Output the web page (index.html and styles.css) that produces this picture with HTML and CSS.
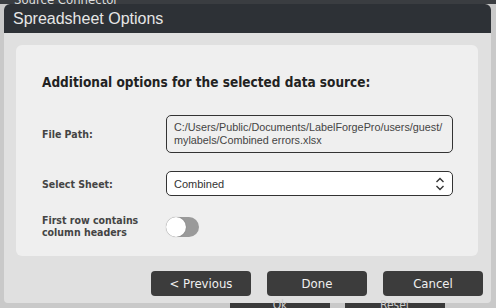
FILE: index.html
```html
<!DOCTYPE html>
<html>
<head>
    <title>Spreadsheet Options</title>
    <link rel="stylesheet" href="styles.css">
</head>
<body>
    <div class="app-top">Source Connector</div>

    <div class="dialog">
        <div class="dialog-header">Spreadsheet Options</div>
        <div class="dialog-body">
            <div class="panel">
                <h3 class="panel-title">Additional options for the selected data source:</h3>

                <div class="row">
                    <label class="field-label">File Path:</label>
                    <div class="path-box">C:/Users/Public/Documents/LabelForgePro/users/guest/<br>mylabels/Combined errors.xlsx</div>
                </div>

                <div class="row">
                    <label class="field-label" for="sheet">Select Sheet:</label>
                    <div class="select-box" id="sheet">
                        <span>Combined</span>
                        <svg class="chevrons" width="10" height="14" viewBox="0 0 10 14">
                            <path d="M1.5 5 L5 1.5 L8.5 5" fill="none" stroke="#333" stroke-width="1.4"/>
                            <path d="M1.5 9 L5 12.5 L8.5 9" fill="none" stroke="#333" stroke-width="1.4"/>
                        </svg>
                    </div>
                </div>

                <div class="row">
                    <label class="field-label">First row contains<br>column headers</label>
                    <div class="toggle"><div class="knob"></div></div>
                </div>
            </div>

            <div class="buttons">
                <button class="btn">&lt; Previous</button>
                <button class="btn">Done</button>
                <button class="btn">Cancel</button>
            </div>
        </div>
    </div>

    <div class="app-bottom">
        <div class="app-btn">Ok</div>
        <div class="app-btn">Reset</div>
    </div>
</body>
</html>
```

FILE: styles.css
```css
body {
    margin: 0;
    width: 496px;
    height: 308px;
    overflow: hidden;
    background: #c9c9c9;
    font-family: "DejaVu Sans Condensed", "DejaVu Sans", sans-serif;
}
.app-top {
    height: 4px;
    background: #3a3d41;
    color: #ddd;
    font-size: 13px;
    line-height: 0;
    padding-left: 14px;
    overflow: hidden;
}
.dialog {
    margin-left: 4px;
    width: 487px;
    height: 299px;
    background: #e0e0e0;
    border-radius: 6px 6px 4px 4px;
    overflow: hidden;
    display: flex;
    flex-direction: column;
}
.dialog-header {
    height: 29px;
    background: #2d3136;
    color: #e6e6e6;
    font-family: "Liberation Sans", sans-serif;
    font-size: 16px;
    line-height: 29px;
    padding-left: 9px;
}
.dialog-body {
    padding: 12px 13px 0 12px;
}
.panel {
    background: #efefef;
    border-radius: 6px;
    height: 211px;
    padding: 29px 0 0 26px;
    box-sizing: border-box;
}
.panel-title {
    margin: 0 0 25px 0;
    font-size: 13.5px;
    line-height: 16px;
    font-weight: bold;
    color: #222;
}
.row {
    display: flex;
    align-items: center;
    margin-bottom: 18px;
}
.field-label {
    width: 124px;
    font-size: 10.5px;
    font-weight: bold;
    color: #444;
    line-height: 12px;
}
.path-box {
    width: 287px;
    height: 38px;
    box-sizing: border-box;
    border: 1.5px solid #333;
    border-radius: 5px;
    padding: 5px 7px;
    font-family: "Liberation Sans", sans-serif;
    font-size: 10.8px;
    line-height: 13px;
    color: #444;
}
.select-box {
    width: 287px;
    height: 25px;
    box-sizing: border-box;
    border: 1.5px solid #333;
    border-radius: 5px;
    background: #fff;
    padding: 0 7px;
    display: flex;
    align-items: center;
    justify-content: space-between;
    font-family: "Liberation Sans", sans-serif;
    font-size: 11px;
    color: #333;
}
.toggle {
    width: 33px;
    height: 20px;
    border-radius: 10px;
    background: #9a9a9a;
    position: relative;
    margin-top: 2px;
}
.knob {
    position: absolute;
    left: 0;
    top: 0;
    width: 20px;
    height: 20px;
    border-radius: 50%;
    background: #fff;
    box-shadow: 0 0 1px rgba(0,0,0,0.4);
}
.buttons {
    display: flex;
    justify-content: flex-end;
    gap: 16px;
    padding-top: 15px;
    margin-right: -5px;
}
.btn {
    width: 100px;
    height: 25px;
    background: #3c3c3c;
    color: #f0f0f0;
    border: none;
    border-radius: 4px;
    font-family: "DejaVu Sans Condensed", "DejaVu Sans", sans-serif;
    font-size: 13px;
    padding: 0;
}
.app-bottom {
    display: flex;
    gap: 15px;
    padding-left: 230px;
}
.app-btn {
    width: 100px;
    height: 10px;
    background: #3a3a3a;
    color: #ccc;
    font-size: 12px;
    text-align: center;
    line-height: 4px;
}
```
